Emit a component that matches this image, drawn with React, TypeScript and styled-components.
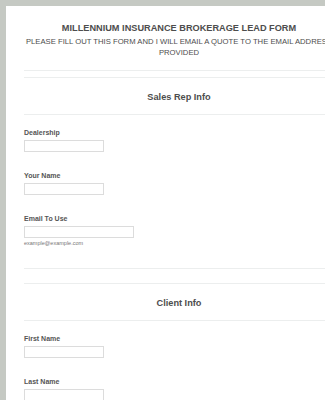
import styled, { createGlobalStyle } from "styled-components";

const GlobalStyle = createGlobalStyle`
  html, body {
    margin: 0;
    padding: 0;
    background: #c5c9c3;
    overflow: hidden;
  }
  body {
    font-family: "Liberation Sans", Arial, sans-serif;
  }
`;

const Page = styled.div`
  padding: 6px 0 0 6px;
  width: 360px;
  height: 400px;
  overflow: hidden;
`;

const Card = styled.div`
  background: #fff;
  padding: 16px 0 0 18px;
  height: 420px;
  width: 340px;
`;

const Content = styled.div`
  width: 310px;
`;

const Header = styled.div`
  text-align: center;
  color: #4d4d4d;
  padding-bottom: 12px;
`;

const Title = styled.div`
  font-size: 9.2px;
  font-weight: bold;
  line-height: 12px;
  margin-bottom: 2px;
`;

const Subtitle = styled.div`
  font-size: 7.7px;
  line-height: 11px;
  white-space: pre;
`;

const Rule = styled.div<{ $gap?: number }>`
  border-top: 1px solid #eceeee;
  margin-top: ${(p) => p.$gap ?? 0}px;
`;

const SectionTitle = styled.div`
  text-align: center;
  font-size: 9.2px;
  font-weight: bold;
  color: #4d4d4d;
  line-height: 12px;
  padding: 13px 0 11px;
`;

const Field = styled.div`
  padding-top: 13px;
  padding-bottom: 6px;
`;

const Label = styled.div`
  font-size: 7px;
  font-weight: bold;
  color: #555;
  line-height: 9px;
  margin-bottom: 3px;
`;

const Input = styled.div<{ $w: number }>`
  width: ${(p) => p.$w}px;
  height: 12px;
  border: 1px solid #dcdcdc;
  box-sizing: border-box;
  background: #fff;
`;

const Hint = styled.div`
  font-size: 5.5px;
  line-height: 7px;
  color: #777;
  margin-top: 2px;
`;

export default function App() {
  return (
    <>
      <GlobalStyle />
      <Page>
        <Card>
          <Content>
            <Header>
              <Title>MILLENNIUM INSURANCE BROKERAGE LEAD FORM</Title>
              <Subtitle>
                PLEASE FILL OUT THIS FORM AND I WILL EMAIL A QUOTE TO THE EMAIL ADDRESS{"\n"}PROVIDED
              </Subtitle>
            </Header>
            <Rule />
            <Rule $gap={6} />
            <SectionTitle>Sales Rep Info</SectionTitle>
            <Rule />
            <Field>
              <Label>Dealership</Label>
              <Input $w={80} />
            </Field>
            <Field>
              <Label>Your Name</Label>
              <Input $w={80} />
            </Field>
            <Field>
              <Label>Email To Use</Label>
              <Input $w={110} />
              <Hint>example@example.com</Hint>
            </Field>
            <Rule $gap={15} />
            <Rule $gap={14} />
            <SectionTitle>Client Info</SectionTitle>
            <Rule />
            <Field>
              <Label>First Name</Label>
              <Input $w={80} />
            </Field>
            <Field>
              <Label>Last Name</Label>
              <Input $w={80} />
            </Field>
          </Content>
        </Card>
      </Page>
    </>
  );
}
